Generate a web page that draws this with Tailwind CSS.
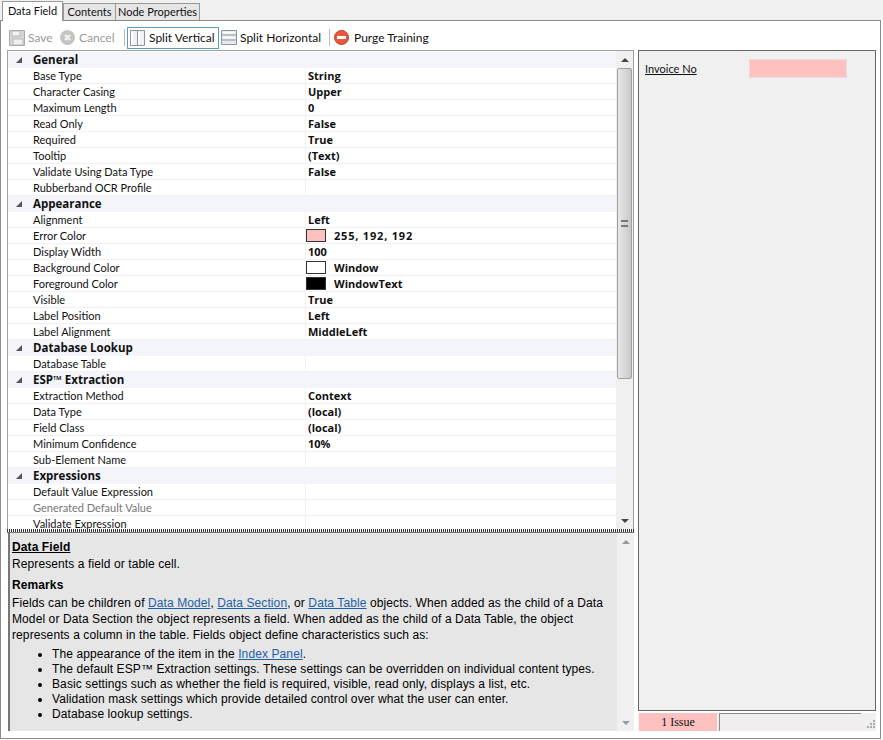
<!DOCTYPE html>
<html lang="en">
<head>
    <meta charset="utf-8" />
    <title>Data Field</title>
    <script src="https://cdn.jsdelivr.net/npm/@tailwindcss/browser@4"></script>
</head>
<body class="bg-white">
<div class="w-[883px] h-[740px] overflow-hidden font-['Lato',sans-serif] text-[11px] text-[#111]">

    <!-- Tabs -->
    <div class="h-[20px] bg-[#f0f0f0] pl-[2px] flex items-end text-[11px] relative z-10 whitespace-nowrap">
        <div class="w-[61px] h-[20px] -mb-px bg-white border border-b-0 border-[#999] flex items-center justify-center">Data Field</div>
        <div class="w-[53px] h-[17px] bg-[#e6e6e6] border border-b-0 border-[#999] flex items-center justify-center">Contents</div>
        <div class="w-[85px] h-[17px] -ml-px bg-[#e6e6e6] border border-b-0 border-[#999] flex items-center justify-center">Node Properties</div>
    </div>

    <!-- Tab frame -->
    <div class="w-[881px] h-[719px] border border-[#8c8c8c] bg-white">

        <!-- Toolbar -->
        <div class="h-[29px] pl-[8px] pt-[4px] flex items-center text-[12px] whitespace-nowrap">
            <svg class="w-[16px] h-[16px] mr-[3px]" viewBox="0 0 16 16"><path d="M.5.5h15v15H.5z" fill="#d4d4d4" stroke="#aaa"/><path d="M3 1h8v5H3z" fill="#f2f2f2" stroke="#aaa" stroke-width=".7"/><path d="M4 9h10v6H4z" fill="#eee" stroke="#aaa" stroke-width=".7"/></svg>
            <span class="w-[32px] text-[#999]">Save</span>
            <svg class="w-[15px] h-[15px] mr-[4px]" viewBox="0 0 15 15"><circle cx="7.5" cy="7.5" r="7.5" fill="#c4c4c4"/><path d="M5 5l5 5M10 5l-5 5" stroke="#f4f4f4" stroke-width="2"/></svg>
            <span class="w-[45px] text-[#999]">Cancel</span>
            <span class="w-px h-[17px] bg-[#bbb] mr-[2px]"></span>
            <div class="w-[92px] h-[22px] border border-[#5b9cc4] flex items-center pl-[2px] gap-[4px] mr-[2px]">
                <svg class="w-[15px] h-[16px]" viewBox="0 0 15 16"><path d="M.5.5h14v15H.5z" fill="#eef1f5" stroke="#8a97a3"/><path d="M7.5 0v16" stroke="#8a97a3"/><path d="M2 2v12M9 2v12" stroke="#fff" stroke-width="2"/></svg>
                <span>Split Vertical</span>
            </div>
            <svg class="w-[16px] h-[15px] mr-[3px]" viewBox="0 0 16 15"><path d="M.5.5h15v14H.5z" fill="#e6eaef" stroke="#8a97a3"/><path d="M0 5h16M0 10h16" stroke="#8a97a3"/><path d="M2 2.500h12M2 7.500h12" stroke="#fff" stroke-width="1.500"/></svg>
            <span class="w-[89px]">Split Horizontal</span>
            <span class="w-px h-[17px] bg-[#bbb] mr-[4px]"></span>
            <svg class="w-[15px] h-[15px] mr-[5px]" viewBox="0 0 15 15"><circle cx="7.5" cy="7.5" r="7" fill="#e8583f" stroke="#c23a22"/><path d="M3 7.500h9" stroke="#fff" stroke-width="3"/></svg>
            <span>Purge Training</span>
        </div>

        <div class="flex h-[688px] pl-[6px]">
            <!-- Left column -->
            <div class="w-[627px]">

                <!-- Property grid -->
                <div class="h-[479px] border border-[#a0a0a0] border-b-0 flex overflow-hidden">
                    <div class="w-[609px] overflow-hidden pt-px">
                        <div class="h-[16px] bg-[#f3f5fa] flex items-center font-['Open_Sans',sans-serif] font-bold text-[11.5px] pl-[25px] relative"><span class="absolute left-[8px] top-[5px] w-0 h-0 border-l-[6px] border-l-transparent border-b-[6px] border-b-[#555]"></span>General</div>
                        <div class="h-[16px] flex border-b border-[#f2f2f2]"><div class="w-[297px] pl-[25px] leading-[15px]">Base Type</div><div class="border-l border-[#f2f2f2] pl-[2px] font-['Open_Sans',sans-serif] text-[11px] font-bold leading-[15px]">String</div></div>
                        <div class="h-[16px] flex border-b border-[#f2f2f2]"><div class="w-[297px] pl-[25px] leading-[15px]">Character Casing</div><div class="border-l border-[#f2f2f2] pl-[2px] font-['Open_Sans',sans-serif] text-[11px] font-bold leading-[15px]">Upper</div></div>
                        <div class="h-[16px] flex border-b border-[#f2f2f2]"><div class="w-[297px] pl-[25px] leading-[15px]">Maximum Length</div><div class="border-l border-[#f2f2f2] pl-[2px] font-['Open_Sans',sans-serif] text-[11px] font-bold leading-[15px]">0</div></div>
                        <div class="h-[16px] flex border-b border-[#f2f2f2]"><div class="w-[297px] pl-[25px] leading-[15px]">Read Only</div><div class="border-l border-[#f2f2f2] pl-[2px] font-['Open_Sans',sans-serif] text-[11px] font-bold leading-[15px]">False</div></div>
                        <div class="h-[16px] flex border-b border-[#f2f2f2]"><div class="w-[297px] pl-[25px] leading-[15px]">Required</div><div class="border-l border-[#f2f2f2] pl-[2px] font-['Open_Sans',sans-serif] text-[11px] font-bold leading-[15px]">True</div></div>
                        <div class="h-[16px] flex border-b border-[#f2f2f2]"><div class="w-[297px] pl-[25px] leading-[15px]">Tooltip</div><div class="border-l border-[#f2f2f2] pl-[2px] font-['Open_Sans',sans-serif] text-[11px] font-bold leading-[15px]">(Text)</div></div>
                        <div class="h-[16px] flex border-b border-[#f2f2f2]"><div class="w-[297px] pl-[25px] leading-[15px]">Validate Using Data Type</div><div class="border-l border-[#f2f2f2] pl-[2px] font-['Open_Sans',sans-serif] text-[11px] font-bold leading-[15px]">False</div></div>
                        <div class="h-[16px] flex border-b border-[#f2f2f2]"><div class="w-[297px] pl-[25px] leading-[15px]">Rubberband OCR Profile</div><div class="border-l border-[#f2f2f2] pl-[2px] font-['Open_Sans',sans-serif] text-[11px] font-bold leading-[15px]"></div></div>

                        <div class="h-[16px] bg-[#f3f5fa] flex items-center font-['Open_Sans',sans-serif] font-bold text-[11.5px] pl-[25px] relative"><span class="absolute left-[8px] top-[5px] w-0 h-0 border-l-[6px] border-l-transparent border-b-[6px] border-b-[#555]"></span>Appearance</div>
                        <div class="h-[16px] flex border-b border-[#f2f2f2]"><div class="w-[297px] pl-[25px] leading-[15px]">Alignment</div><div class="border-l border-[#f2f2f2] pl-[2px] font-['Open_Sans',sans-serif] text-[11px] font-bold leading-[15px]">Left</div></div>
                        <div class="h-[16px] flex border-b border-[#f2f2f2]"><div class="w-[297px] pl-[25px] leading-[15px]">Error Color</div><div class="border-l border-[#f2f2f2] font-['Open_Sans',sans-serif] text-[11px] font-bold leading-[15px] flex items-center"><span class="w-[20px] h-[13px] bg-[#ffc0c0] border border-[#333] mr-[8px]"></span><span class="tracking-[0.8px]">255, 192, 192</span></div></div>
                        <div class="h-[16px] flex border-b border-[#f2f2f2]"><div class="w-[297px] pl-[25px] leading-[15px]">Display Width</div><div class="border-l border-[#f2f2f2] pl-[2px] font-['Open_Sans',sans-serif] text-[11px] font-bold leading-[15px]">100</div></div>
                        <div class="h-[16px] flex border-b border-[#f2f2f2]"><div class="w-[297px] pl-[25px] leading-[15px]">Background Color</div><div class="border-l border-[#f2f2f2] font-['Open_Sans',sans-serif] text-[11px] font-bold leading-[15px] flex items-center"><span class="w-[20px] h-[13px] bg-white border border-[#333] mr-[8px]"></span>Window</div></div>
                        <div class="h-[16px] flex border-b border-[#f2f2f2]"><div class="w-[297px] pl-[25px] leading-[15px]">Foreground Color</div><div class="border-l border-[#f2f2f2] font-['Open_Sans',sans-serif] text-[11px] font-bold leading-[15px] flex items-center"><span class="w-[20px] h-[13px] bg-black border border-[#333] mr-[8px]"></span>WindowText</div></div>
                        <div class="h-[16px] flex border-b border-[#f2f2f2]"><div class="w-[297px] pl-[25px] leading-[15px]">Visible</div><div class="border-l border-[#f2f2f2] pl-[2px] font-['Open_Sans',sans-serif] text-[11px] font-bold leading-[15px]">True</div></div>
                        <div class="h-[16px] flex border-b border-[#f2f2f2]"><div class="w-[297px] pl-[25px] leading-[15px]">Label Position</div><div class="border-l border-[#f2f2f2] pl-[2px] font-['Open_Sans',sans-serif] text-[11px] font-bold leading-[15px]">Left</div></div>
                        <div class="h-[16px] flex border-b border-[#f2f2f2]"><div class="w-[297px] pl-[25px] leading-[15px]">Label Alignment</div><div class="border-l border-[#f2f2f2] pl-[2px] font-['Open_Sans',sans-serif] text-[11px] font-bold leading-[15px]">MiddleLeft</div></div>

                        <div class="h-[16px] bg-[#f3f5fa] flex items-center font-['Open_Sans',sans-serif] font-bold text-[11.5px] pl-[25px] relative"><span class="absolute left-[8px] top-[5px] w-0 h-0 border-l-[6px] border-l-transparent border-b-[6px] border-b-[#555]"></span>Database Lookup</div>
                        <div class="h-[16px] flex border-b border-[#f2f2f2]"><div class="w-[297px] pl-[25px] leading-[15px]">Database Table</div><div class="border-l border-[#f2f2f2] pl-[2px] font-['Open_Sans',sans-serif] text-[11px] font-bold leading-[15px]"></div></div>

                        <div class="h-[16px] bg-[#f3f5fa] flex items-center font-['Open_Sans',sans-serif] font-bold text-[11.5px] pl-[25px] relative"><span class="absolute left-[8px] top-[5px] w-0 h-0 border-l-[6px] border-l-transparent border-b-[6px] border-b-[#555]"></span>ESP™ Extraction</div>
                        <div class="h-[16px] flex border-b border-[#f2f2f2]"><div class="w-[297px] pl-[25px] leading-[15px]">Extraction Method</div><div class="border-l border-[#f2f2f2] pl-[2px] font-['Open_Sans',sans-serif] text-[11px] font-bold leading-[15px]">Context</div></div>
                        <div class="h-[16px] flex border-b border-[#f2f2f2]"><div class="w-[297px] pl-[25px] leading-[15px]">Data Type</div><div class="border-l border-[#f2f2f2] pl-[2px] font-['Open_Sans',sans-serif] text-[11px] font-bold leading-[15px]">(local)</div></div>
                        <div class="h-[16px] flex border-b border-[#f2f2f2]"><div class="w-[297px] pl-[25px] leading-[15px]">Field Class</div><div class="border-l border-[#f2f2f2] pl-[2px] font-['Open_Sans',sans-serif] text-[11px] font-bold leading-[15px]">(local)</div></div>
                        <div class="h-[16px] flex border-b border-[#f2f2f2]"><div class="w-[297px] pl-[25px] leading-[15px]">Minimum Confidence</div><div class="border-l border-[#f2f2f2] pl-[2px] font-['Open_Sans',sans-serif] text-[11px] font-bold leading-[15px]">10%</div></div>
                        <div class="h-[16px] flex border-b border-[#f2f2f2]"><div class="w-[297px] pl-[25px] leading-[15px]">Sub-Element Name</div><div class="border-l border-[#f2f2f2] pl-[2px] font-['Open_Sans',sans-serif] text-[11px] font-bold leading-[15px]"></div></div>

                        <div class="h-[16px] bg-[#f3f5fa] flex items-center font-['Open_Sans',sans-serif] font-bold text-[11.5px] pl-[25px] relative"><span class="absolute left-[8px] top-[5px] w-0 h-0 border-l-[6px] border-l-transparent border-b-[6px] border-b-[#555]"></span>Expressions</div>
                        <div class="h-[16px] flex border-b border-[#f2f2f2]"><div class="w-[297px] pl-[25px] leading-[15px]">Default Value Expression</div><div class="border-l border-[#f2f2f2] pl-[2px] font-['Open_Sans',sans-serif] text-[11px] font-bold leading-[15px]"></div></div>
                        <div class="h-[16px] flex border-b border-[#f2f2f2]"><div class="w-[297px] pl-[25px] leading-[15px] text-[#777]">Generated Default Value</div><div class="border-l border-[#f2f2f2] pl-[2px] font-['Open_Sans',sans-serif] text-[11px] font-bold leading-[15px]"></div></div>
                        <div class="h-[16px] flex border-b border-[#f2f2f2]"><div class="w-[297px] pl-[25px] leading-[15px]">Validate Expression</div><div class="border-l border-[#f2f2f2] pl-[2px] font-['Open_Sans',sans-serif] text-[11px] font-bold leading-[15px]"></div></div>
                    </div>

                    <!-- Grid scrollbar -->
                    <div class="w-[17px] bg-[#f0f0f0] flex flex-col items-center">
                        <div class="h-[17px] flex items-center justify-center"><span class="w-0 h-0 border-x-[4px] border-x-transparent border-b-[4px] border-b-[#444]"></span></div>
                        <div class="w-[15px] h-[311px] bg-gradient-to-r from-[#e8e8e8] to-[#c8c8c8] border border-[#a0a0a0] rounded-[2px] flex items-center justify-center">
                            <span class="w-[7px] h-[7px] border-y-2 border-[#777]"></span>
                        </div>
                        <div class="grow"></div>
                        <div class="h-[17px] flex items-center justify-center"><span class="w-0 h-0 border-x-[4px] border-x-transparent border-t-[4px] border-t-[#444]"></span></div>
                    </div>
                </div>

                <!-- Splitter -->
                <div class="h-[4px] bg-[repeating-linear-gradient(90deg,#333_0,#333_1px,#fff_1px,#fff_2px)] border-b border-[#777]"></div>

                <!-- Help pane -->
                <div class="h-[198px] ml-px border-l-2 border-[#777] flex font-['Liberation_Sans',sans-serif] text-[12px] text-black tracking-[0.1px]">
                    <div class="w-[607px] bg-[#e6e6e6] pl-[2px] pt-[7px] overflow-hidden">
                        <div class="font-bold underline leading-[15px]">Data Field</div>
                        <div class="leading-[15px] mt-[2px]">Represents a field or table cell.</div>
                        <div class="font-bold leading-[15px] mt-[6px]">Remarks</div>
                        <div class="leading-[16px] mt-[2px] w-[602px]">Fields can be children of <a class="text-[#1c5fa8] underline">Data Model</a>, <a class="text-[#1c5fa8] underline">Data Section</a>, or <a class="text-[#1c5fa8] underline">Data Table</a> objects. When added as the child of a Data Model or Data Section the object represents a field. When added as the child of a Data Table, the object represents a column in the table. Fields object define characteristics such as:</div>
                        <ul class="list-disc pl-[40px] mt-[4px] leading-[15px]">
                            <li>The appearance of the item in the <a class="text-[#1c5fa8] underline">Index Panel</a>.</li>
                            <li>The default ESP™ Extraction settings. These settings can be overridden on individual content types.</li>
                            <li>Basic settings such as whether the field is required, visible, read only, displays a list, etc.</li>
                            <li>Validation mask settings which provide detailed control over what the user can enter.</li>
                            <li>Database lookup settings.</li>
                        </ul>
                    </div>
                    <div class="w-[17px] bg-[#f0f0f0] flex flex-col justify-between items-center">
                        <div class="h-[17px] flex items-center justify-center"><span class="w-0 h-0 border-x-[4px] border-x-transparent border-b-[4px] border-b-[#999]"></span></div>
                        <div class="h-[17px] flex items-center justify-center"><span class="w-0 h-0 border-x-[4px] border-x-transparent border-t-[4px] border-t-[#999]"></span></div>
                    </div>
                </div>
            </div>

            <!-- Right column -->
            <div class="w-[238px] ml-[4px] flex flex-col">
                <div class="h-[661px] bg-[#f0f0f0] border border-[#666] flex items-start pl-[6px] pt-[8px] gap-[52px]">
                    <span class="underline mt-[2px] w-[52px] whitespace-nowrap">Invoice No</span>
                    <span class="w-[98px] h-[19px] bg-[#ffc0c0] border border-[#e6dede]"></span>
                </div>
                <div class="h-[18px] mt-[2px] flex items-stretch bg-[#f0f0f0]">
                    <div class="w-[78px] ml-px bg-[#ffc0c0] font-['Liberation_Serif',serif] text-[12px] flex items-center justify-center">1 Issue</div>
                    <div class="w-[142px] ml-[2px] bg-[#f0eeee] border-l border-t border-[#8c8c8c]"></div>
                    <div class="grow relative"><svg class="absolute right-[1px] bottom-[2px] w-[9px] h-[9px]" viewBox="0 0 9 9" fill="#aaa"><path d="M7 0h2v2H7zM4 3h2v2H4zM7 3h2v2H7zM1 6h2v2H1zM4 6h2v2H4zM7 6h2v2H7z"/></svg></div>
                </div>
            </div>
        </div>
    </div>
</div>
</body>
</html>
